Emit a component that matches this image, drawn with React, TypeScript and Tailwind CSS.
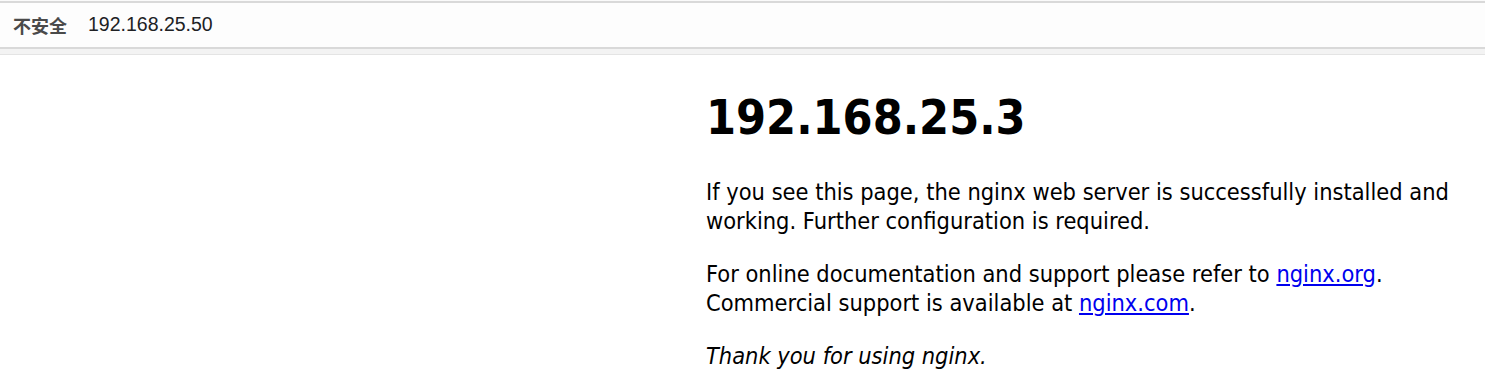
export default function App() {
  return (
    <div className="min-h-[389px] w-full overflow-hidden bg-white">
      {/* Address bar */}
      <div className="h-[1px] bg-[#fafafa]" />
      <div className="flex h-[48px] items-center border-t-2 border-b-2 border-[#d9d9d9] bg-[#fdfdfd] pl-[13px]">
        <span className="text-[18px] font-bold text-[#4a4a4a] [font-family:'Noto_Sans_CJK_SC',sans-serif]">
          不安全
        </span>
        <span className="ml-[21px] text-[19.5px] text-[#202124] [font-family:'Liberation_Sans',Arial,sans-serif]">
          192.168.25.50
        </span>
      </div>
      <div className="h-[6px] border-b border-[#e4e4e4] bg-[#f3f3f3]" />

      {/* Page */}
      <div className="ml-[706px] w-[779px] text-black [font-family:'DejaVu_Sans_Condensed','DejaVu_Sans',sans-serif]">
        <h1 className="mt-[33px] mb-[32px] text-[48px] font-bold leading-[58px]">192.168.25.3</h1>
        <p className="mb-[24px] text-[23.4px] leading-[29px]">
          If you see this page, the nginx web server is successfully installed and working. Further
          configuration is required.
        </p>
        <p className="mb-[24px] text-[23.4px] leading-[29px]">
          For online documentation and support please refer to{" "}
          <a href="#" className="text-[#0000ee] underline">
            nginx.org
          </a>
          .<br />
          Commercial support is available at{" "}
          <a href="#" className="text-[#0000ee] underline">
            nginx.com
          </a>
          .
        </p>
        <p className="text-[23.4px] italic leading-[29px]">Thank you for using nginx.</p>
      </div>
    </div>
  );
}
